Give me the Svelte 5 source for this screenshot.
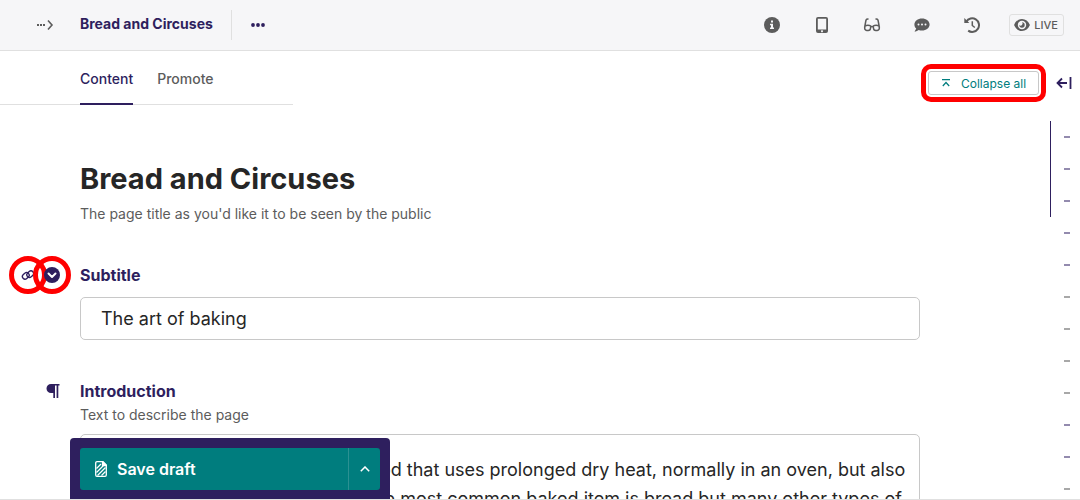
<script>
  let subtitle = $state('The art of baking');
  let title = $state('Bread and Circuses');
  let intro = $state(
    'Baking is a method of cooking food that uses prolonged dry heat, normally in an oven, but also in hot ashes, or on hot stones. The most common baked item is bread but many other types of foods are baked.'
  );
  const kinds = 'hhhhhmmmmhhm';
  const marks = [...kinds].map((kind, id) => ({ id, muted: kind === 'm' }));
</script>

<div class="page">
  <header class="bar">
    <button class="plain expand" aria-label="Show breadcrumbs">
      <svg width="18" height="12" viewBox="0 0 18 12"><path d="M1 5h2v2H1zM4 5h2v2H4zM7 5h2v2H7z" fill="currentColor" /><path d="M12 1.500l4 4.500-4 4.500" fill="none" stroke="currentColor" stroke-width="1.600" /></svg>
    </button>
    <a class="crumb" href="#page">Bread and Circuses</a>
    <button class="plain more" aria-label="Actions">
      <svg width="16" height="6" viewBox="0 0 16 6" fill="currentColor"><circle cx="3" cy="3" r="1.900" /><circle cx="8" cy="3" r="1.900" /><circle cx="13" cy="3" r="1.900" /></svg>
    </button>
    <nav class="tools" aria-label="Page tools">
      <button class="plain tool" aria-label="Info">
        <svg width="16" height="16" viewBox="0 0 16 16"><circle cx="8" cy="8" r="8" fill="currentColor" /><path d="M7 3.500h2v2H7zM6 6.700h3v3.800h1v1.600H6v-1.600h1V8.200H6z" fill="#f6f6f8" /></svg>
      </button>
      <button class="plain tool" aria-label="Preview">
        <svg width="16" height="16" viewBox="0 0 16 16"><path fill-rule="evenodd" fill="currentColor" d="M4 0h8a2 2 0 0 1 2 2v12a2 2 0 0 1-2 2H4a2 2 0 0 1-2-2V2a2 2 0 0 1 2-2zM3.800 1.700v10.800h8.400V1.700zM8 13.200a1 1 0 1 0 .01 0z" /></svg>
      </button>
      <button class="plain tool" aria-label="Accessibility checks">
        <svg width="18" height="16" viewBox="0 0 18 16" fill="none" stroke="currentColor" stroke-width="1.500"><path d="M5.500 2.300C4 1.700 3.200 2.300 2.900 3.500L1.700 10M12.500 2.300c1.500-.6 2.300 0 2.600 1.200l1.200 6.500M1.700 9.200c2-1.100 4.500-1.100 6.300 0M10 9.200c1.800-1.100 4.300-1.100 6.300 0M7.500 9.800q1.500-.8 3 0" /><path d="M1.700 9.500v1.700a2.200 2.200 0 0 0 2.200 2.200h1.300A2.300 2.300 0 0 0 7.500 11.200l.4-2M16.300 9.500v1.700a2.200 2.200 0 0 1-2.200 2.200h-1.300a2.300 2.300 0 0 1-2.300-2.200l-.4-2" /></svg>
      </button>
      <button class="plain tool" aria-label="Comments">
        <svg width="16" height="16" viewBox="0 0 16 16"><path fill="currentColor" d="M8 1.500c4.200 0 7.600 2.600 7.600 6s-3.400 6-7.600 6c-1.200 0-2.300-.2-3.300-.6-1 .8-2.500 1.500-4.200 1.500.9-1 1.500-2 1.700-2.800C1 10.500.4 9.100.4 7.500c0-3.400 3.400-6 7.600-6z" /><g fill="#f6f6f8"><circle cx="4.500" cy="7.500" r="1" /><circle cx="8" cy="7.500" r="1" /><circle cx="11.500" cy="7.500" r="1" /></g></svg>
      </button>
      <button class="plain tool" aria-label="History">
        <svg width="16" height="16" viewBox="0 0 16 16" fill="none" stroke="currentColor"><path d="M2.300 4.700A6.800 6.800 0 1 1 4.200 13.600" stroke-width="2" /><path d="M.3 1v5h5z" fill="currentColor" stroke="none" /><path d="M8.300 4.300v4.200l2.500 2" stroke-width="1.500" /></svg>
      </button>
      <button class="live">
        <svg width="16" height="14" viewBox="0 0 16 14"><path d="M8 1c3.600 0 6.200 2.300 7.700 5.500a1 1 0 0 1 0 1C14.200 10.700 11.600 13 8 13S1.800 10.700.3 7.500a1 1 0 0 1 0-1C1.800 3.300 4.400 1 8 1z" fill="currentColor" /><circle cx="8" cy="7" r="4.200" fill="#f6f6f8" /><path d="M8 4.300A2.700 2.700 0 1 1 5.300 7 1.800 1.800 0 0 0 8 4.300z" fill="currentColor" /></svg>
        LIVE
      </button>
    </nav>
  </header>

  <div class="body">
    <main class="main">
      <div class="tabs" role="tablist">
        <button class="tab active" role="tab" aria-selected="true">Content</button>
        <button class="tab" role="tab" aria-selected="false">Promote</button>
      </div>

      <div class="form">
        <input class="title" aria-label="Title" bind:value={title} />
        <p class="help">The page title as you'd like it to be seen by the public</p>

        <section class="field">
          <div class="heading">
            <div class="marks">
              <a class="ring" href="#subtitle" aria-label="Link to Subtitle">
                <svg width="14" height="12" viewBox="0 0 14 12" fill="none" stroke="currentColor" stroke-width="1.400"><rect x="-3.600" y="-2.600" width="7.200" height="5.200" rx="2.600" transform="translate(4.800 6.800) rotate(-42)" /><rect x="-3.600" y="-2.600" width="7.200" height="5.200" rx="2.600" transform="translate(9.200 5.200) rotate(-42)" /></svg>
              </a>
              <button class="plain ring over" aria-label="Toggle Subtitle">
                <svg width="16" height="16" viewBox="0 0 16 16"><circle cx="8" cy="8" r="8" fill="currentColor" /><path d="M4.500 6.500L8 10l3.500-3.500" fill="none" stroke="#fff" stroke-width="2" stroke-linecap="round" stroke-linejoin="round" /></svg>
              </button>
            </div>
            <label for="subtitle">Subtitle</label>
          </div>
          <input id="subtitle" class="box" bind:value={subtitle} />
        </section>

        <section class="field">
          <div class="heading">
            <div class="marks pilcrow">
              <svg width="14" height="14" viewBox="0 0 14 14" fill="currentColor"><path d="M5 0h8.500v1.600h-1.200V14h-1.700V1.600H9V14H7.300V9H5A4.500 4.500 0 0 1 5 0z" /></svg>
            </div>
            <label for="intro">Introduction</label>
          </div>
          <p class="help">Text to describe the page</p>
          <textarea id="intro" class="box area" rows="4" bind:value={intro}></textarea>
        </section>
      </div>
    </main>

    <aside class="side">
      <button class="collapse">
        <svg width="10" height="10" viewBox="0 0 10 10" fill="none" stroke="currentColor" stroke-width="1.200"><path d="M1 1.600h8M1.800 8L5 4.500 8.200 8" /></svg>
        Collapse all
      </button>
      <div class="minimap">
        <button class="plain toggle" aria-label="Toggle minimap">
          <svg width="16" height="12" viewBox="0 0 16 12" fill="none" stroke="currentColor" stroke-width="1.800"><path d="M11 6H2M6 1.500L1.500 6 6 10.500M14.500 0v12" /></svg>
        </button>
        <div class="rail">
          {#each marks as mark (mark.id)}
            <span class="dash" class:muted={mark.muted}></span>
          {/each}
        </div>
      </div>
    </aside>
  </div>

  <footer class="footer">
    <button class="save">
      <svg width="12" height="16" viewBox="0 0 12 16" fill="none" stroke="currentColor" stroke-width="1.300"><path d="M2 .7h6L11.300 4v10a1.300 1.300 0 0 1-1.300 1.300H2A1.300 1.300 0 0 1 .7 14V2A1.300 1.300 0 0 1 2 .7z" /><path d="M7.500.7V4.500h3.800z" fill="currentColor" /><path d="M1.500 7.500L6 3M1.500 11.500L8.500 4.500M2.500 14.500L10.500 6.500M6.500 14.500l4-4" /></svg>
      Save draft
    </button>
    <button class="save-more" aria-label="More save options">
      <svg width="10" height="6" viewBox="0 0 10 6" fill="none" stroke="currentColor" stroke-width="1.500"><path d="M.8 5.300L5 1l4.200 4.300" /></svg>
    </button>
  </footer>
</div>

<style>
  :global(body) {
    background: #fff;
    font-family: Inter, 'Liberation Sans', sans-serif;
  }
  * {
    box-sizing: border-box;
  }
  button,
  input,
  textarea {
    font-family: inherit;
    margin: 0;
  }
  svg {
    display: block;
    flex: none;
  }
  .page {
    position: relative;
    display: flex;
    flex-direction: column;
    height: 100vh;
    overflow: hidden;
    border-bottom: 1px solid #e0e0e0;
    color: #262626;
  }
  .plain {
    display: flex;
    align-items: center;
    justify-content: center;
    padding: 0;
    border: 0;
    background: none;
    color: #5c5c5c;
  }
  .bar {
    display: flex;
    align-items: center;
    flex: none;
    height: 51px;
    padding-right: 16px;
    background: #f6f6f8;
    border-bottom: 1px solid #e0e0e0;
  }
  .expand {
    width: 80px;
    padding-left: 10px;
  }
  .crumb {
    padding: 0 18px 2px 0;
    line-height: 28px;
    border-right: 1px solid #e0e0e0;
    color: #2e1f5e;
    font-size: 14px;
    font-weight: 700;
    text-decoration: none;
  }
  .more {
    width: 52px;
    height: 30px;
    color: #2e1f5e;
  }
  .tools {
    display: flex;
    align-items: center;
    margin-left: auto;
  }
  .tool {
    width: 50px;
    height: 50px;
  }
  .live {
    display: flex;
    align-items: center;
    gap: 4px;
    height: 22px;
    margin-left: 12px;
    padding: 0 5px 0 4px;
    border: 1px solid #e0e0e0;
    border-radius: 3px;
    background: none;
    color: #5c5c5c;
    font-size: 11px;
    font-weight: 500;
  }
  .body {
    display: flex;
    flex: 1;
    min-height: 0;
  }
  .main {
    flex: 1;
    min-width: 0;
  }
  .tabs {
    display: flex;
    gap: 24px;
    width: 293px;
    height: 54px;
    padding-left: 80px;
    border-bottom: 1px solid #e0e0e0;
  }
  .tab {
    height: 54px;
    padding: 2px 0 0;
    border: 0;
    border-bottom: 2px solid transparent;
    background: none;
    color: #5c5c5c;
    font-size: 14px;
    font-weight: 500;
  }
  .tab.active {
    border-color: #2e1f5e;
    color: #2e1f5e;
  }
  .form {
    padding: 50px 0 0 80px;
  }
  .title {
    display: block;
    width: 100%;
    height: 46px;
    padding: 0;
    border: 0;
    color: #262626;
    font-size: 29px;
    font-weight: 700;
  }
  .help {
    margin: 0;
    color: #5c5c5c;
    font-size: 14px;
    line-height: 24px;
  }
  .title + .help {
    padding-top: 1px;
  }
  .field {
    padding-top: 37px;
  }
  .field + .field {
    padding-top: 39px;
  }
  .heading {
    display: flex;
    align-items: center;
    height: 24px;
    margin-left: -80px;
    color: #2e1f5e;
    font-size: 16px;
    font-weight: 700;
  }
  .marks {
    display: flex;
    flex: none;
    width: 80px;
    padding-left: 9px;
  }
  .pilcrow {
    padding-left: 46px;
  }
  .ring {
    display: flex;
    align-items: center;
    justify-content: center;
    width: 38px;
    height: 38px;
    border: 5px solid #f00;
    border-radius: 50%;
    color: #2e1f5e;
  }
  .over {
    margin-left: -14px;
  }
  .box {
    display: block;
    width: 100%;
    height: 43px;
    padding: 0 20px;
    border: 1px solid #c8c8c8;
    border-radius: 5px;
    background: #fff;
    color: #262626;
    font-size: 18px;
  }
  .heading + .box {
    margin-top: 10px;
  }
  .area {
    height: 160px;
    margin-top: 7px;
    padding: 20px 8px 0 20px;
    line-height: 29px;
    resize: none;
    overflow: hidden;
  }
  .side {
    display: flex;
    align-items: flex-start;
    flex: none;
    width: 160px;
  }
  .collapse {
    display: flex;
    align-items: center;
    gap: 10px;
    height: 24px;
    margin: 20px 0 0 8px;
    padding: 0 12px;
    border: 1px solid #c8c8c8;
    border-radius: 3px;
    outline: 5px solid #f00;
    outline-offset: 2px;
    background: #fff;
    color: #007d7e;
    font-size: 12px;
    white-space: nowrap;
  }
  .minimap {
    margin-left: auto;
    width: 30px;
  }
  .toggle {
    width: 28px;
    height: 24px;
    margin-top: 20px;
    color: #2e1f5e;
  }
  .rail {
    display: flex;
    flex-direction: column;
    gap: 30px;
    margin-top: 26px;
    padding: 15px 0 0 14px;
    background: linear-gradient(#2e1f5e, #2e1f5e) 0 0 / 1px 96px no-repeat;
  }
  .dash {
    width: 6px;
    height: 2px;
    background: #938bae;
  }
  .muted {
    background: #a8a8a8;
  }
  .footer {
    position: absolute;
    left: 70px;
    bottom: -1px;
    display: flex;
    width: 320px;
    padding: 10px;
    border-radius: 4px 4px 0 0;
    background: #2e1f5e;
  }
  .save,
  .save-more {
    display: flex;
    align-items: center;
    height: 42px;
    border: 0;
    background: #007d7e;
    color: #fff;
  }
  .save {
    flex: 1;
    gap: 10px;
    padding: 0 15px;
    border-radius: 3px 0 0 3px;
    font-size: 16px;
    font-weight: 600;
  }
  .save-more {
    justify-content: center;
    width: 32px;
    padding: 0;
    border-left: 1px solid #2b9192;
    border-radius: 0 3px 3px 0;
  }
</style>
